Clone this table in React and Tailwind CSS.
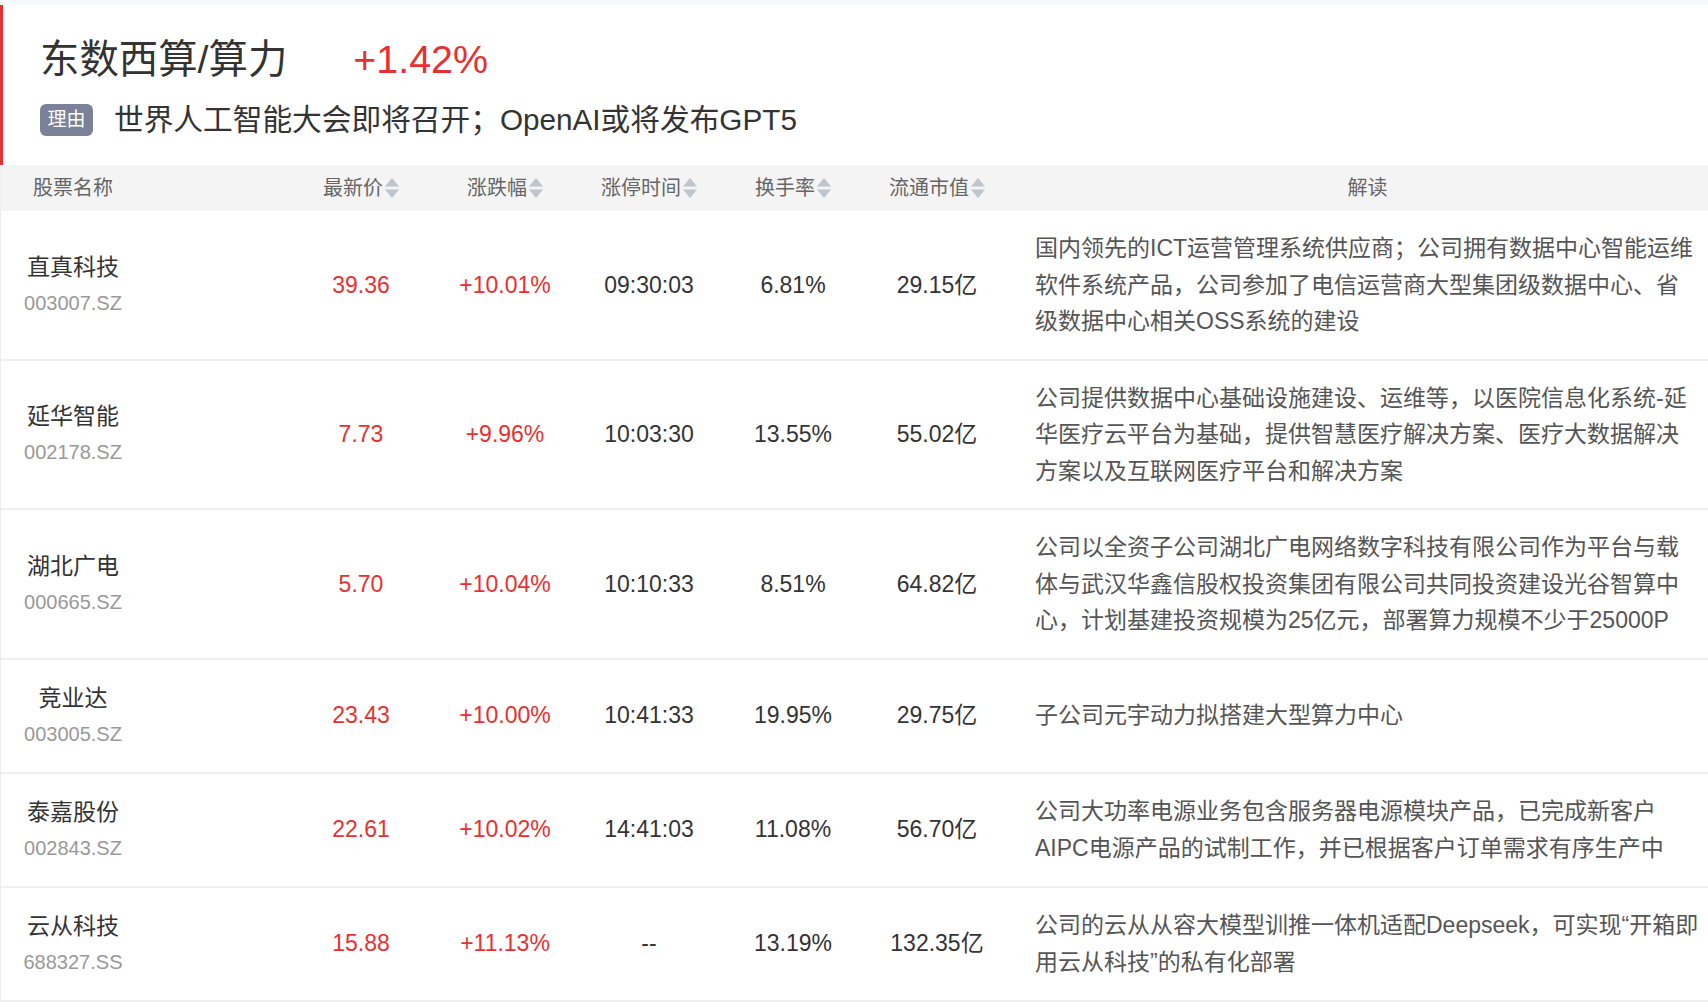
import React from "react";

const rows = [
  {
    name: "直真科技",
    code: "003007.SZ",
    price: "39.36",
    change: "+10.01%",
    time: "09:30:03",
    turnover: "6.81%",
    cap: "29.15亿",
    note: "国内领先的ICT运营管理系统供应商；公司拥有数据中心智能运维软件系统产品，公司参加了电信运营商大型集团级数据中心、省级数据中心相关OSS系统的建设",
  },
  {
    name: "延华智能",
    code: "002178.SZ",
    price: "7.73",
    change: "+9.96%",
    time: "10:03:30",
    turnover: "13.55%",
    cap: "55.02亿",
    note: "公司提供数据中心基础设施建设、运维等，以医院信息化系统-延华医疗云平台为基础，提供智慧医疗解决方案、医疗大数据解决方案以及互联网医疗平台和解决方案",
  },
  {
    name: "湖北广电",
    code: "000665.SZ",
    price: "5.70",
    change: "+10.04%",
    time: "10:10:33",
    turnover: "8.51%",
    cap: "64.82亿",
    note: "公司以全资子公司湖北广电网络数字科技有限公司作为平台与载体与武汉华鑫信股权投资集团有限公司共同投资建设光谷智算中心，计划基建投资规模为25亿元，部署算力规模不少于25000P",
  },
  {
    name: "竞业达",
    code: "003005.SZ",
    price: "23.43",
    change: "+10.00%",
    time: "10:41:33",
    turnover: "19.95%",
    cap: "29.75亿",
    note: "子公司元宇动力拟搭建大型算力中心",
  },
  {
    name: "泰嘉股份",
    code: "002843.SZ",
    price: "22.61",
    change: "+10.02%",
    time: "14:41:03",
    turnover: "11.08%",
    cap: "56.70亿",
    note: "公司大功率电源业务包含服务器电源模块产品，已完成新客户AIPC电源产品的试制工作，并已根据客户订单需求有序生产中",
  },
  {
    name: "云从科技",
    code: "688327.SS",
    price: "15.88",
    change: "+11.13%",
    time: "--",
    turnover: "13.19%",
    cap: "132.35亿",
    note: "公司的云从从容大模型训推一体机适配Deepseek，可实现“开箱即用云从科技”的私有化部署",
  },
];

// little up/down sort arrows next to header labels
const SortIcon = () => (
  <svg width="14" height="20" viewBox="0 0 14 20" className="ml-[2px] shrink-0">
    <polygon points="7,0 14,8.5 0,8.5" fill="#c0c4cc" />
    <polygon points="0,11.5 14,11.5 7,20" fill="#c0c4cc" />
  </svg>
);

const SortHead = ({ label }) => (
  <div className="flex items-center justify-center">
    <span>{label}</span>
    <SortIcon />
  </div>
);

const App = () => {
  return (
    <div className="w-[1708px] h-[1002px] overflow-hidden bg-white font-['Liberation_Sans','Noto_Sans_CJK_SC',sans-serif]">
      <div className="h-[5px] bg-[#f7f8fa]" />

      {/* Sector header */}
      <div className="border-l-[3px] border-[#e93030] pl-[37px] pt-[31px] pb-[29px]">
        <div className="flex items-center">
          <h1 className="text-[39.4px] leading-[46px] text-[#333]">东数西算/算力</h1>
          <span className="ml-[66px] text-[39.4px] leading-[46px] text-[#e93030]">+1.42%</span>
        </div>
        <div className="mt-[22px] flex items-center">
          <span className="h-[32px] w-[53px] rounded-[6px] bg-[#7a8199] text-white text-[19px] leading-[32px] text-center">
            理由
          </span>
          <span className="ml-[21px] text-[29.7px] leading-[32px] text-[#333]">
            世界人工智能大会即将召开；OpenAI或将发布GPT5
          </span>
        </div>
      </div>

      {/* Table */}
      <div className="border-l border-[#eeeeee]">
        <div className="grid grid-cols-[288px_repeat(5,144px)_1fr] h-[46px] items-center bg-[#f4f4f4] text-[20px] text-[#666]">
          <div className="w-[144px] text-center">股票名称</div>
          <SortHead label="最新价" />
          <SortHead label="涨跌幅" />
          <SortHead label="涨停时间" />
          <SortHead label="换手率" />
          <SortHead label="流通市值" />
          <div className="pl-[18px] text-center">解读</div>
        </div>

        {rows.map((r) => (
          <div
            key={r.code}
            className="grid grid-cols-[288px_repeat(5,144px)_1fr] min-h-[114px] items-center border-b-2 border-[#efefef] py-[19px] text-[23px] text-[#333]"
          >
            <div className="w-[144px] text-center">
              <div className="leading-[36px]">{r.name}</div>
              <div className="leading-[36px] text-[20px] text-[#999]">{r.code}</div>
            </div>
            <div className="text-center text-[#e93030]">{r.price}</div>
            <div className="text-center text-[#e93030]">{r.change}</div>
            <div className="text-center">{r.time}</div>
            <div className="text-center">{r.turnover}</div>
            <div className="text-center">{r.cap}</div>
            <div className="pl-[26px]">
              <p className="w-[666px] leading-[36.5px] text-[#555]">{r.note}</p>
            </div>
          </div>
        ))}
      </div>
    </div>
  );
};

export default App;
